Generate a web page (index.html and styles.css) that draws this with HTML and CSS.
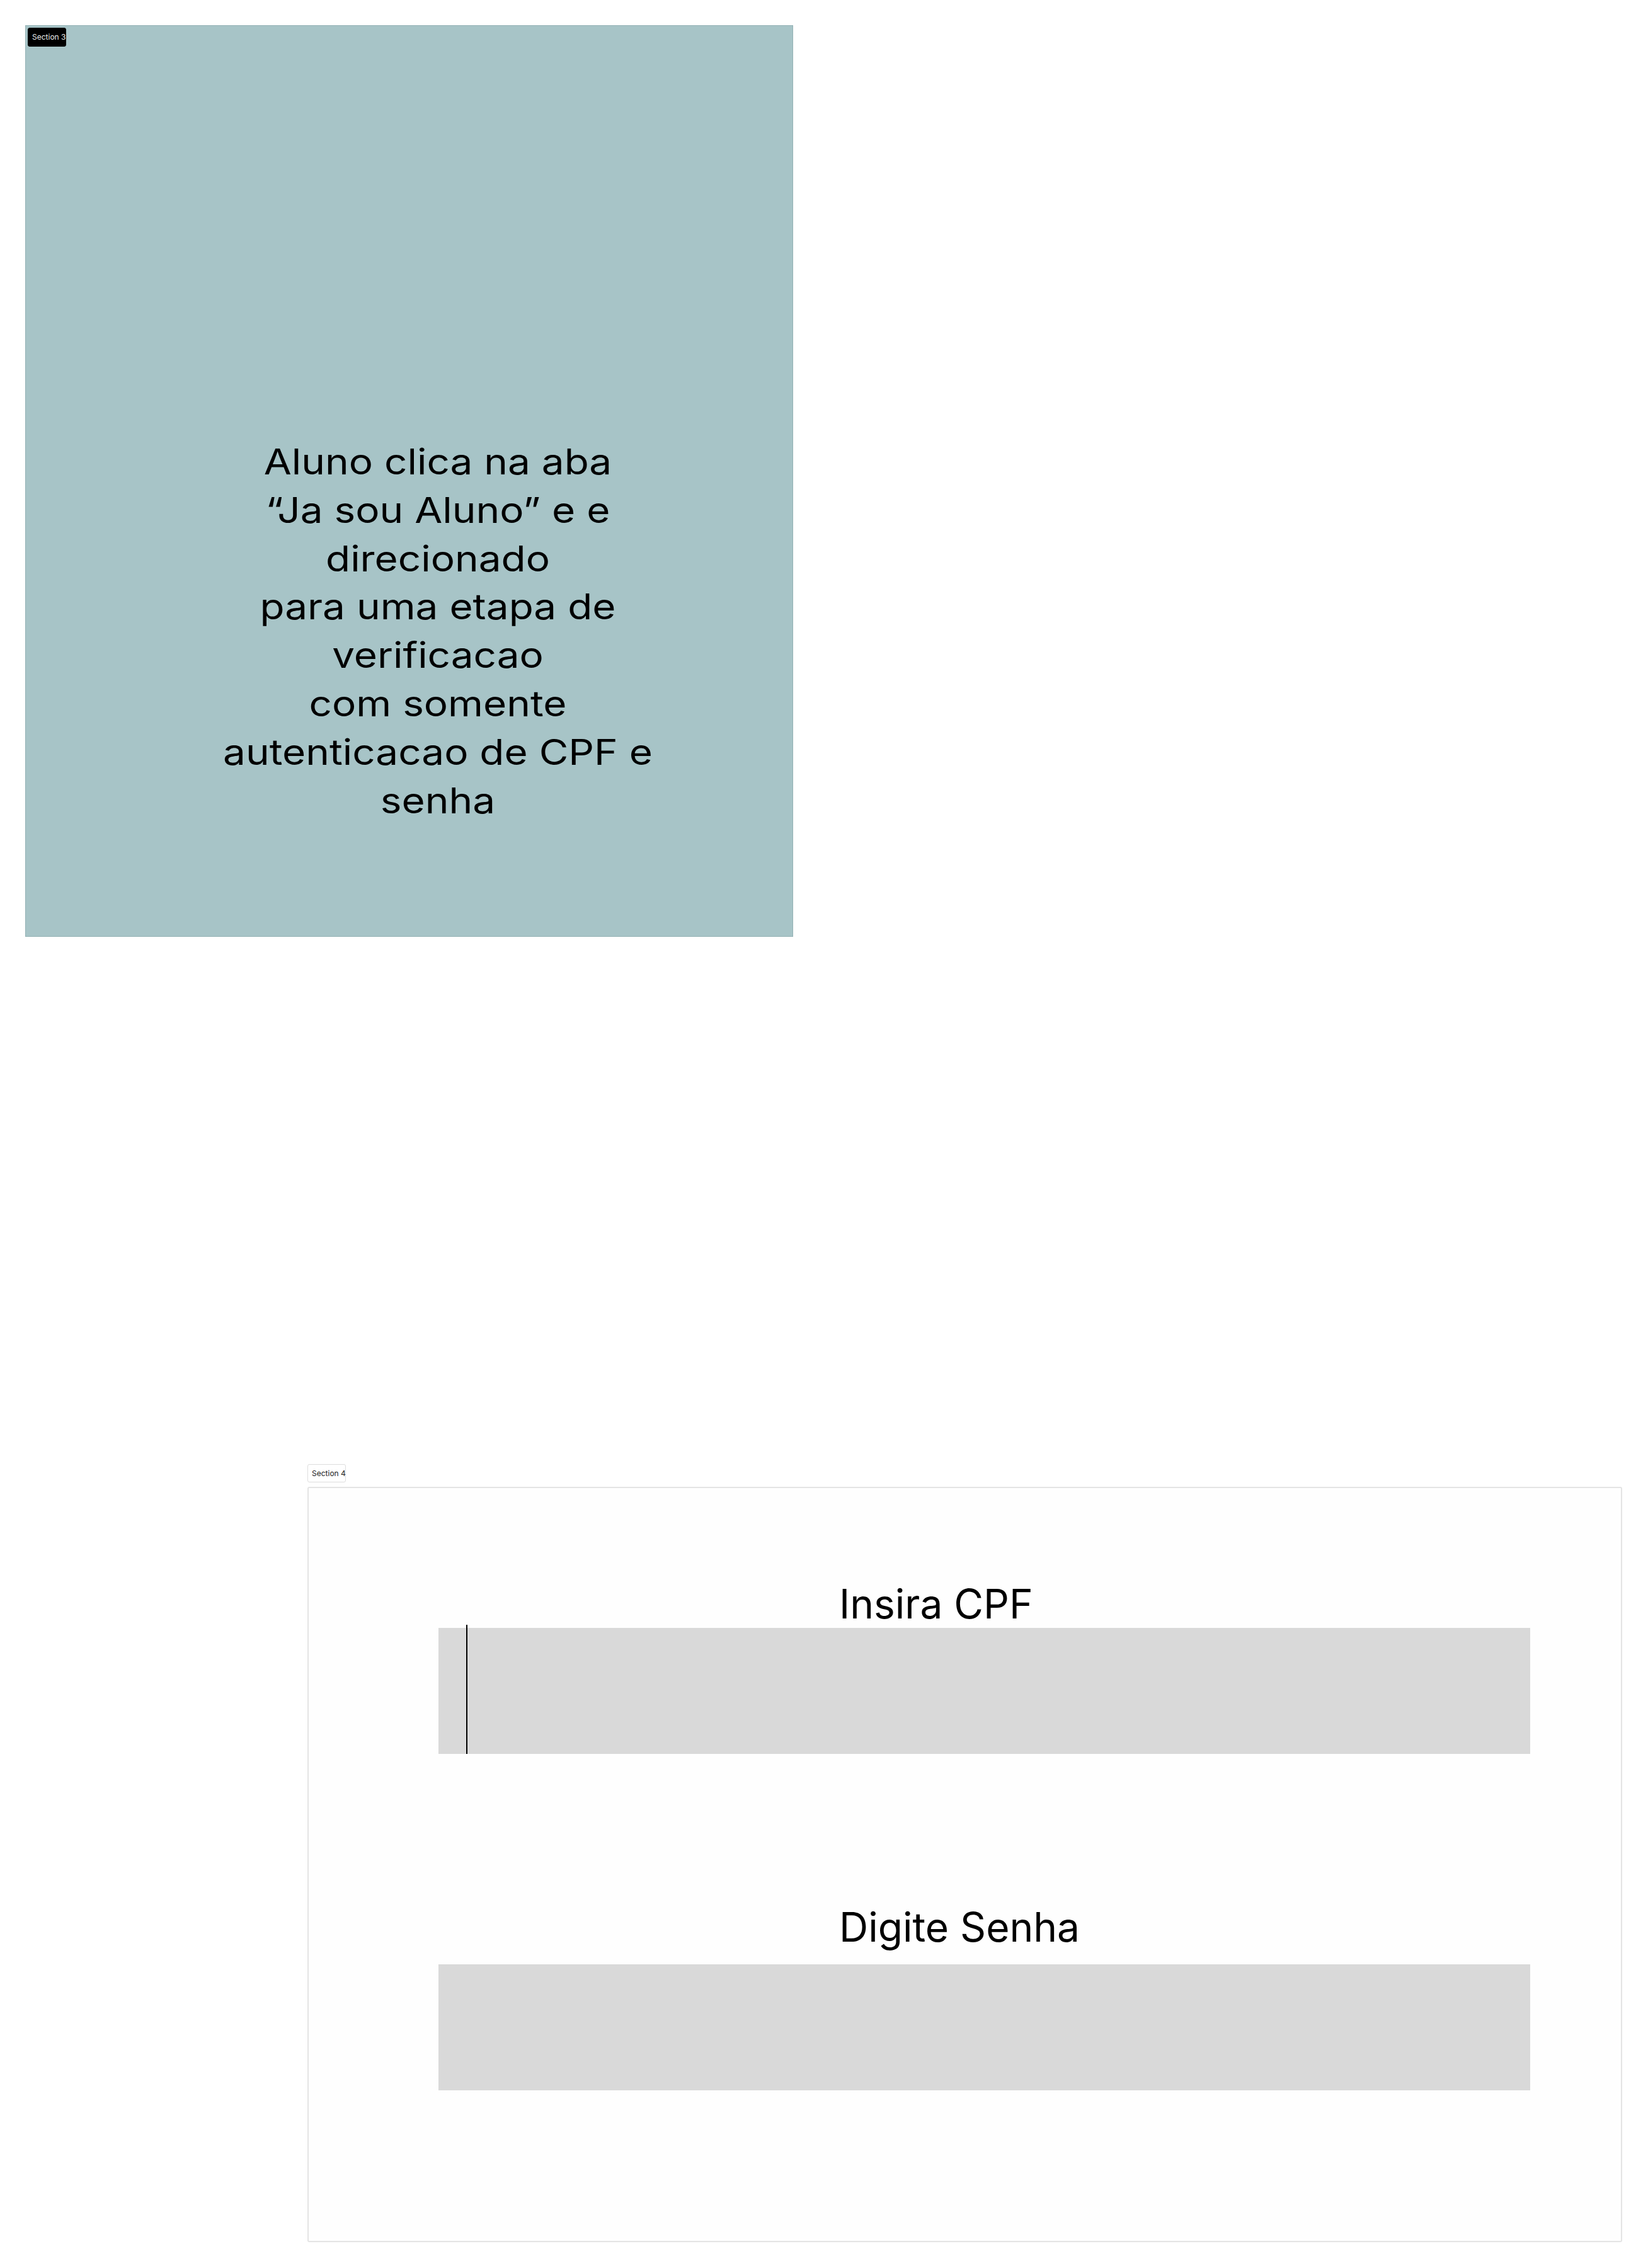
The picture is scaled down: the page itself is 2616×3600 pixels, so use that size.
FILE: index.html
```html
<!DOCTYPE html>
<html lang="pt">
<head>
<meta charset="utf-8">
<title>Sections</title>
<link rel="stylesheet" href="styles.css">
</head>
<body>
<div class="canvas">
  <section class="section3">
    <span class="badge badge-dark">Section 3</span>
    <div class="s3-text">
      <span class="line">Aluno clica na aba</span>
      <span class="line">“Ja sou Aluno” e e</span>
      <span class="line">direcionado</span>
      <span class="line">para uma etapa de</span>
      <span class="line">verificacao</span>
      <span class="line">com somente</span>
      <span class="line">autenticacao de CPF e</span>
      <span class="line">senha</span>
    </div>
  </section>

  <div class="section4-wrap">
    <span class="badge badge-light">Section 4</span>
    <section class="section4">
      <div class="field field-cpf">
        <div class="field-label">Insira CPF</div>
        <div class="field-box"><span class="caret"></span></div>
      </div>
      <div class="field field-senha">
        <div class="field-label">Digite Senha</div>
        <div class="field-box"></div>
      </div>
    </section>
  </div>
</div>
</body>
</html>
```

FILE: styles.css
```css
* { box-sizing: border-box; }
html, body {
  margin: 0;
  padding: 0;
  background: #ffffff;
  font-family: Inter, "Noto Sans", sans-serif;
  color: #000;
}
.canvas {
  width: 2616px;
  min-height: 3600px;
  padding: 40px 0 0 40px;
  display: flex;
  flex-direction: column;
  align-items: flex-start;
}
.badge {
  display: inline-block;
  height: 30px;
  line-height: 28px;
  padding: 0 6px;
  font-size: 12px;
  border-radius: 3px;
  white-space: nowrap;
}
.badge-dark {
  position: absolute;
  left: 3px;
  top: 3px;
  width: 61px;
  background: #000;
  color: #e8e8e8;
  border: 1px solid #000;
}
.badge-light {
  width: 61px;
  height: 29px;
  background: #fff;
  color: #222;
  border: 1px solid #dedede;
  line-height: 27px;
}
.section3 {
  position: relative;
  width: 1219px;
  height: 1447px;
  background: #a7c4c7;
  border: 1px solid #94b2b5;
  padding: 654px 0 0 91px;
}
.s3-text {
  display: flex;
  flex-direction: column;
  align-items: center;
  font-size: 56px;
  line-height: 76.8px;
  font-weight: 400;
  transform: scaleX(1.14);
  transform-origin: 50% 0;
}
.line { display: block; white-space: nowrap; }

.section4-wrap {
  margin: 837px 0 0 448px;
  display: flex;
  flex-direction: column;
  align-items: flex-start;
  gap: 7px;
}
.section4 {
  width: 2087px;
  height: 1199px;
  background: #fefefe;
  border: 2px solid #e4e4e4;
  border-radius: 3px;
  padding: 145px 0 0 206px;
  display: flex;
  flex-direction: column;
  gap: 236px;
}
.field {
  display: flex;
  flex-direction: column;
}
.field-label {
  padding-left: 636px;
  font-size: 64px;
  line-height: 77px;
  font-weight: 400;
}
.field-senha .field-label { margin-bottom: 21px; }
.field-box {
  position: relative;
  width: 1733px;
  height: 200px;
  background: #d9d9d9;
}
.caret {
  position: absolute;
  left: 44px;
  top: -5px;
  width: 2px;
  height: 205px;
  background: #000;
}
```
